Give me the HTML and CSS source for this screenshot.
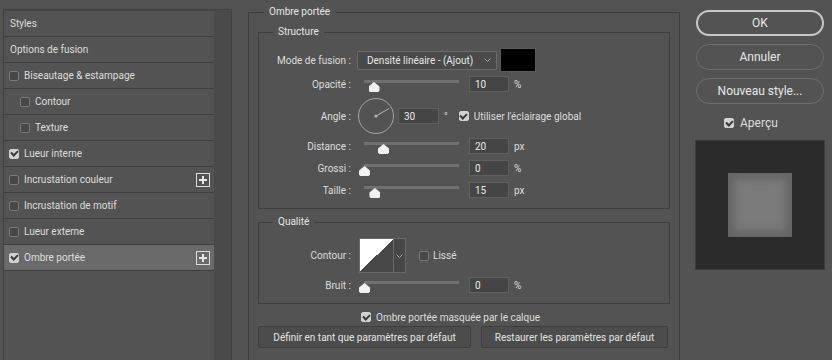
FILE: index.html
```html
<!DOCTYPE html>
<html lang="fr">

<head>
    <meta charset="UTF-8">
    <meta name="viewport" content="width=device-width, initial-scale=1.0">
    <title>Style de calque</title>
    <link rel="stylesheet" href="styles.css">
</head>

<body>
    <div class="dialog">
        <aside class="styles-panel">
            <ul class="styles-list">
                <li class="style-item plain">Styles</li>
                <li class="style-item plain">Options de fusion</li>
                <li class="style-item"><span class="check"></span>Biseautage &amp; estampage</li>
                <li class="style-item sub"><span class="check"></span>Contour</li>
                <li class="style-item sub"><span class="check"></span>Texture</li>
                <li class="style-item"><span class="check on"></span>Lueur interne</li>
                <li class="style-item"><span class="check"></span>Incrustation couleur<span class="add"></span></li>
                <li class="style-item"><span class="check"></span>Incrustation de motif</li>
                <li class="style-item"><span class="check"></span>Lueur externe</li>
                <li class="style-item active"><span class="check on"></span>Ombre portée<span class="add"></span></li>
            </ul>
            <div class="scrollbar"></div>
        </aside>

        <fieldset class="effect">
            <legend>Ombre portée</legend>

            <fieldset class="group">
                <legend>Structure</legend>

                <div class="row mode-row">
                    <span class="label">Mode de fusion :</span>
                    <div class="select">
                        <span>Densité linéaire - (Ajout)</span>
                        <svg width="7" height="4" viewBox="0 0 7 4"><path d="M0.5 0.5 L3.5 3.5 L6.5 0.5" stroke="#a9a9a9" fill="none"/></svg>
                    </div>
                    <span class="swatch"></span>
                </div>

                <div class="row slide-row first">
                    <span class="label">Opacité :</span>
                    <div class="slider"><span class="thumb" style="left: 10%"></span></div>
                    <input class="num" type="text" value="10">
                    <span class="unit">%</span>
                </div>

                <div class="row angle-row">
                    <span class="label">Angle :</span>
                    <svg class="dial" width="36" height="36" viewBox="0 0 36 36">
                        <circle cx="18" cy="18" r="17.5" fill="none" stroke="#a6a6a6"/>
                        <line x1="18" y1="18" x2="31" y2="10.5" stroke="#b4b4b4"/>
                        <circle cx="18" cy="18" r="1.6" fill="#b4b4b4"/>
                    </svg>
                    <input class="num angle" type="text" value="30">
                    <span class="unit">°</span>
                    <span class="check on global"></span>
                    <span>Utiliser l'éclairage global</span>
                </div>

                <div class="row slide-row tight">
                    <span class="label">Distance :</span>
                    <div class="slider"><span class="thumb" style="left: 20%"></span></div>
                    <input class="num" type="text" value="20">
                    <span class="unit">px</span>
                </div>

                <div class="row slide-row">
                    <span class="label">Grossi :</span>
                    <div class="slider"><span class="thumb" style="left: 0%"></span></div>
                    <input class="num" type="text" value="0">
                    <span class="unit">%</span>
                </div>

                <div class="row slide-row">
                    <span class="label">Taille :</span>
                    <div class="slider"><span class="thumb" style="left: 11%"></span></div>
                    <input class="num" type="text" value="15">
                    <span class="unit">px</span>
                </div>
            </fieldset>

            <fieldset class="group quality">
                <legend>Qualité</legend>

                <div class="row contour-row">
                    <span class="label">Contour :</span>
                    <div class="contour-picker">
                        <span class="curve"></span>
                        <span class="curve-menu">
                            <svg width="7" height="4" viewBox="0 0 7 4"><path d="M0.5 0.5 L3.5 3.5 L6.5 0.5" stroke="#a9a9a9" fill="none"/></svg>
                        </span>
                    </div>
                    <span class="check smooth"></span>
                    <span>Lissé</span>
                </div>

                <div class="row slide-row first">
                    <span class="label">Bruit :</span>
                    <div class="slider"><span class="thumb" style="left: 0%"></span></div>
                    <input class="num" type="text" value="0">
                    <span class="unit">%</span>
                </div>
            </fieldset>

            <div class="knockout">
                <span class="check on"></span>
                <span>Ombre portée masquée par le calque</span>
            </div>

            <div class="defaults">
                <button class="flat-btn wide">Définir en tant que paramètres par défaut</button>
                <button class="flat-btn">Restaurer les paramètres par défaut</button>
            </div>
        </fieldset>

        <div class="actions">
            <button class="pill primary">OK</button>
            <button class="pill">Annuler</button>
            <button class="pill">Nouveau style...</button>
            <div class="preview-toggle">
                <span class="check on"></span>
                <span>Aperçu</span>
            </div>
            <div class="preview">
                <div class="preview-square"></div>
            </div>
        </div>
    </div>
</body>

</html>
```

FILE: styles.css
```css
* {
    box-sizing: border-box;
    margin: 0;
    padding: 0;
}

html,
body {
    height: 360px;
    overflow: hidden;
}

body {
    background-color: #535353;
    font-family: 'Segoe UI', Roboto, sans-serif;
    font-size: 10px;
    color: #dedede;
}

.dialog {
    display: flex;
    align-items: flex-start;
    height: 360px;
    overflow: hidden;
}

/* left list of effects */
.styles-panel {
    display: flex;
    width: 229px;
    height: 351px;
    margin: 9px 0 0 3px;
    border: 1px solid #414141;
    border-bottom: none;
}

.styles-list {
    list-style: none;
    width: 210px;
    border-top: 1px solid #474747;
}

.scrollbar {
    flex: 1;
    background-color: #4a4a4a;
}

.style-item {
    display: flex;
    align-items: center;
    height: 26px;
    padding-left: 5px;
    border-bottom: 1px solid #3e3e3e;
}

.style-item.plain {
    padding-left: 6px;
}

.style-item.sub {
    padding-left: 16px;
}

.style-item.active {
    background-color: #6a6a6a;
}

.check {
    flex: none;
    display: flex;
    align-items: center;
    justify-content: center;
    width: 10px;
    height: 10px;
    margin-right: 5px;
    border: 1px solid #7a7a7a;
    border-radius: 2px;
    background-color: #474747;
}

.check.on {
    border-color: #d2d2d2;
    background-color: #d2d2d2;
}

.check.on::after {
    content: '';
    width: 3px;
    height: 5px;
    margin-top: -2px;
    border: solid #3a3a3a;
    border-width: 0 2px 2px 0;
    transform: rotate(45deg);
}

.add {
    width: 14px;
    height: 14px;
    margin: 0 4px 0 auto;
    border: 1px solid #dcdcdc;
    background:
        linear-gradient(#e6e6e6, #e6e6e6) center / 8px 2px no-repeat,
        linear-gradient(#e6e6e6, #e6e6e6) center / 2px 8px no-repeat;
}

/* settings */
fieldset {
    border: 1px solid #3d3d3d;
    min-width: 0;
}

legend {
    line-height: 14px;
    padding: 0 5px;
    color: #e6e6e6;
}

.effect {
    width: 432px;
    margin: 5px 0 0 16px;
    padding: 6px 9px 30px;
}

.effect > legend {
    margin-left: 6px;
}

.group {
    padding: 9px 0 10px;
}

.group > legend {
    margin-left: 14px;
}

.quality {
    margin-top: 6px;
}

.row {
    display: flex;
    align-items: center;
}

.label {
    flex: none;
    width: 92px;
    text-align: right;
}

.mode-row {
    height: 24px;
}

.select {
    display: flex;
    align-items: center;
    justify-content: space-between;
    width: 140px;
    height: 19px;
    margin-left: 6px;
    padding: 0 5px 0 9px;
    border: 1px solid #6a6a6a;
    border-radius: 2px;
    background-color: #4a4a4a;
    color: #e8e8e8;
}

.swatch {
    width: 36px;
    height: 24px;
    margin-left: 3px;
    border: 1px solid #5a5a5a;
    background-color: #000;
}

.slide-row {
    height: 16px;
    margin-top: 6px;
}

.slide-row.first {
    margin-top: 4px;
}

.slide-row.tight {
    margin-top: 3px;
}

.slider {
    position: relative;
    flex: none;
    width: 95px;
    height: 16px;
    margin-left: 13px;
    background: linear-gradient(#717171, #717171) 0 4px / 100% 3px no-repeat;
}

.thumb {
    position: absolute;
    top: 6px;
    width: 11px;
    height: 10px;
    margin-left: -5px;
    background-color: #f2f2f2;
    clip-path: polygon(50% 0, 100% 45%, 100% 85%, 88% 100%, 12% 100%, 0 85%, 0 45%);
}

.num {
    flex: none;
    width: 40px;
    height: 16px;
    margin-left: 10px;
    padding: 0 5px;
    border: 1px solid #5f5f5f;
    background-color: #454545;
    color: #ebebeb;
    font: inherit;
    outline: none;
}

.unit {
    margin-left: 5px;
}

.angle-row {
    height: 38px;
    margin-top: 5px;
}

.dial {
    flex: none;
    margin-left: 7px;
}

.num.angle {
    width: 41px;
    margin-left: 4px;
}

.check.global {
    margin-left: 11px;
}

.contour-row {
    height: 35px;
}

.contour-picker {
    display: flex;
    height: 35px;
    margin-left: 8px;
    border: 1px solid #6a6a6a;
}

.curve {
    width: 33px;
    background: linear-gradient(to bottom right, #ffffff 50%, #474747 50%);
}

.curve-menu {
    display: flex;
    align-items: center;
    justify-content: center;
    width: 12px;
    border-left: 1px solid #6a6a6a;
    background-color: #474747;
}

.check.smooth {
    margin-left: 13px;
    margin-right: 4px;
}

.knockout {
    display: flex;
    align-items: center;
    height: 14px;
    margin-top: 6px;
    padding-left: 103px;
}

.defaults {
    display: flex;
    gap: 10px;
    margin-top: 2px;
}

.flat-btn {
    width: 187px;
    height: 22px;
    border: 1px solid #3e3e3e;
    border-radius: 2px;
    background-color: #4c4c4c;
    color: #e4e4e4;
    font: inherit;
}

.flat-btn.wide {
    width: 213px;
}

/* right column */
.actions {
    display: flex;
    flex-direction: column;
    width: 130px;
    margin: 10px 0 0 15px;
}

.pill {
    height: 26px;
    margin: 0 1px 8px;
    border: 1px solid #6e6e6e;
    border-radius: 13px;
    background: transparent;
    color: #e8e8e8;
    font-family: inherit;
    font-size: 12px;
}

.pill.primary {
    border: 2px solid #c8c8c8;
}

.preview-toggle {
    display: flex;
    align-items: center;
    height: 14px;
    margin-top: 4px;
    padding-left: 29px;
    font-size: 12px;
}

.preview-toggle .check {
    margin-right: 6px;
}

.preview {
    display: flex;
    align-items: center;
    justify-content: center;
    width: 130px;
    height: 130px;
    margin-top: 10px;
    border: 1px solid #3c3c3c;
    background-color: #2b2b2b;
}

.preview-square {
    width: 64px;
    height: 64px;
    background-color: #7b7b7b;
    box-shadow: inset 0 0 10px 6px #646464;
}
```
